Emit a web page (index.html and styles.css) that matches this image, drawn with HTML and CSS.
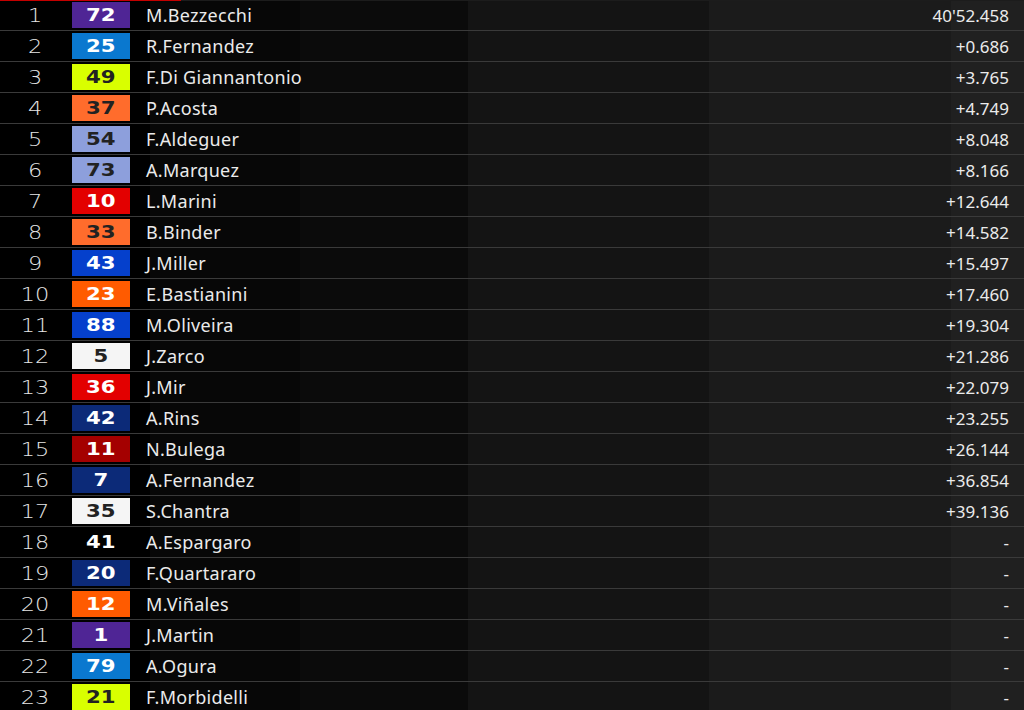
FILE: index.html
```html
<!DOCTYPE html>
<html>
<head>
<meta charset="utf-8">
<link rel="stylesheet" href="styles.css">
</head>
<body>
<div class="board">
  <div class="row"><span class="pos"><i>1</i></span><span class="badge c-purple"><b>72</b></span><span class="name">M.Bezzecchi</span><span class="time">40'52.458</span></div>
  <div class="row"><span class="pos"><i>2</i></span><span class="badge c-blue"><b>25</b></span><span class="name">R.Fernandez</span><span class="time">+0.686</span></div>
  <div class="row"><span class="pos"><i>3</i></span><span class="badge c-lime"><b>49</b></span><span class="name">F.Di Giannantonio</span><span class="time">+3.765</span></div>
  <div class="row"><span class="pos"><i>4</i></span><span class="badge c-orange"><b>37</b></span><span class="name">P.Acosta</span><span class="time">+4.749</span></div>
  <div class="row"><span class="pos"><i>5</i></span><span class="badge c-lav"><b>54</b></span><span class="name">F.Aldeguer</span><span class="time">+8.048</span></div>
  <div class="row"><span class="pos"><i>6</i></span><span class="badge c-lav"><b>73</b></span><span class="name">A.Marquez</span><span class="time">+8.166</span></div>
  <div class="row"><span class="pos"><i>7</i></span><span class="badge c-red"><b>10</b></span><span class="name">L.Marini</span><span class="time">+12.644</span></div>
  <div class="row"><span class="pos"><i>8</i></span><span class="badge c-orange"><b>33</b></span><span class="name">B.Binder</span><span class="time">+14.582</span></div>
  <div class="row"><span class="pos"><i>9</i></span><span class="badge c-royal"><b>43</b></span><span class="name">J.Miller</span><span class="time">+15.497</span></div>
  <div class="row"><span class="pos"><i>10</i></span><span class="badge c-orange2"><b>23</b></span><span class="name">E.Bastianini</span><span class="time">+17.460</span></div>
  <div class="row"><span class="pos"><i>11</i></span><span class="badge c-royal"><b>88</b></span><span class="name">M.Oliveira</span><span class="time">+19.304</span></div>
  <div class="row"><span class="pos"><i>12</i></span><span class="badge c-white"><b>5</b></span><span class="name">J.Zarco</span><span class="time">+21.286</span></div>
  <div class="row"><span class="pos"><i>13</i></span><span class="badge c-red"><b>36</b></span><span class="name">J.Mir</span><span class="time">+22.079</span></div>
  <div class="row"><span class="pos"><i>14</i></span><span class="badge c-navy"><b>42</b></span><span class="name">A.Rins</span><span class="time">+23.255</span></div>
  <div class="row"><span class="pos"><i>15</i></span><span class="badge c-dred"><b>11</b></span><span class="name">N.Bulega</span><span class="time">+26.144</span></div>
  <div class="row"><span class="pos"><i>16</i></span><span class="badge c-navy"><b>7</b></span><span class="name">A.Fernandez</span><span class="time">+36.854</span></div>
  <div class="row"><span class="pos"><i>17</i></span><span class="badge c-white"><b>35</b></span><span class="name">S.Chantra</span><span class="time">+39.136</span></div>
  <div class="row"><span class="pos"><i>18</i></span><span class="badge c-none"><b>41</b></span><span class="name">A.Espargaro</span><span class="time">-</span></div>
  <div class="row"><span class="pos"><i>19</i></span><span class="badge c-navy"><b>20</b></span><span class="name">F.Quartararo</span><span class="time">-</span></div>
  <div class="row"><span class="pos"><i>20</i></span><span class="badge c-orange2"><b>12</b></span><span class="name">M.Viñales</span><span class="time">-</span></div>
  <div class="row"><span class="pos"><i>21</i></span><span class="badge c-purple"><b>1</b></span><span class="name">J.Martin</span><span class="time">-</span></div>
  <div class="row"><span class="pos"><i>22</i></span><span class="badge c-blue"><b>79</b></span><span class="name">A.Ogura</span><span class="time">-</span></div>
  <div class="row"><span class="pos"><i>23</i></span><span class="badge c-lime"><b>21</b></span><span class="name">F.Morbidelli</span><span class="time">-</span></div>
</div>
</body>
</html>
```
FILE: styles.css
```css
html, body {
  margin: 0;
  padding: 0;
  background: #000;
  overflow: hidden;
}
body {
  width: 1024px;
  height: 710px;
}
.board {
  width: 1024px;
  height: 710px;
  overflow: hidden;
  background-image:
    linear-gradient(#c40000, #c40000),
    linear-gradient(#1c1c1c, #1c1c1c),
    linear-gradient(to right,
      #000 0, #000 150px,
      #070707 150px, #070707 300px,
      #0b0b0b 300px, #0b0b0b 468px,
      #141414 468px, #141414 709px,
      #1b1b1b 709px, #1b1b1b 951px,
      #202020 951px, #202020 1024px);
  background-size: 181px 1px, 1024px 1px, 100% 100%;
  background-position: 0 0, 0 0, 0 0;
  background-repeat: no-repeat;
  font-family: "Noto Sans", "DejaVu Sans", sans-serif;
}
.row {
  display: flex;
  align-items: center;
  height: 30px;
  border-bottom: 1px solid #3a3a3a;
  color: #ebebeb;
}
.pos {
  width: 70px;
  text-align: center;
  font-family: "DejaVu Sans", sans-serif;
  font-weight: 200;
  font-size: 19px;
  color: #e6e6e6;
}
.pos i {
  display: inline-block;
  font-style: normal;
  transform: scaleX(1.18);
}
.badge {
  width: 58px;
  height: 26px;
  margin-left: 2px;
  display: flex;
  align-items: center;
  justify-content: center;
  box-sizing: border-box;
}
.badge b {
  display: inline-block;
  font-family: "DejaVu Sans", sans-serif;
  font-weight: 700;
  font-size: 17px;
  line-height: 1;
  transform: scaleX(1.25);
  color: #fff;
}
.name {
  margin-left: 16px;
  font-size: 18px;
  letter-spacing: 0.3px;
  flex: 1;
}
.time {
  margin-right: 15px;
  font-size: 17px;
  text-align: right;
}
.c-purple { background: #4f2595; }
.c-blue { background: #0a78cf; }
.c-lime { background: #d9ff00; }
.c-lime b { color: #222; }
.c-orange { background: #ff6c2c; }
.c-orange b { color: #222; }
.c-orange2 { background: #ff5b00; }
.c-lav { background: #8d9fdc; }
.c-lav b { color: #222; }
.c-red { background: #e30000; }
.c-royal { background: #0540cc; }
.c-white { background: #f5f5f5; }
.c-white b { color: #222; }
.c-navy { background: #0c2a78; }
.c-dred { background: #a40000; }
.c-none { background: transparent; }
```
